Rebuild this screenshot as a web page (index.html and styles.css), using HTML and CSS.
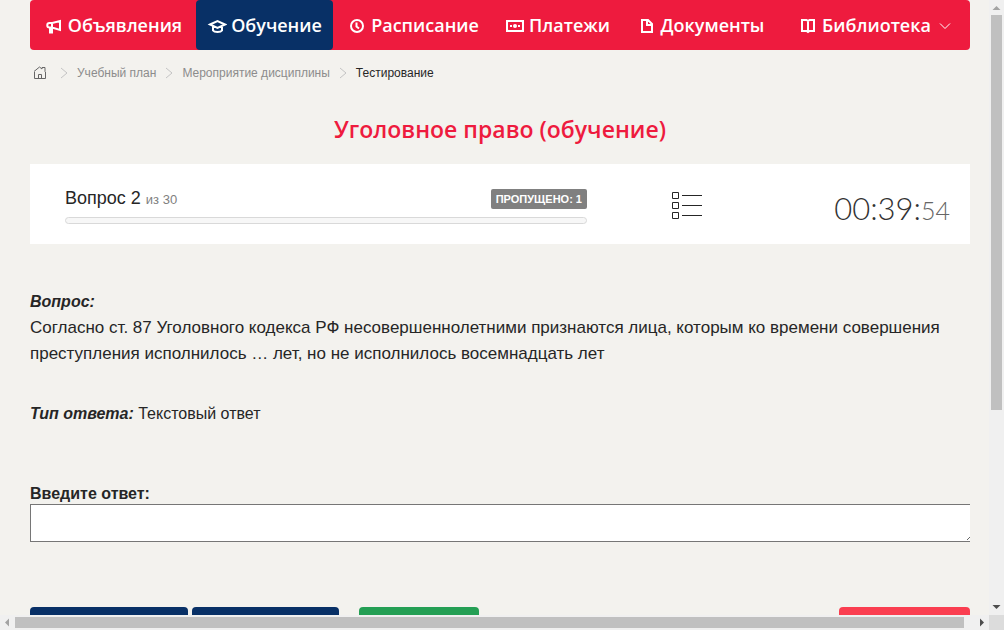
FILE: index.html
```
<!DOCTYPE html>
<html lang="ru">
<head>
<meta charset="utf-8">
<meta name="viewport" content="width=device-width, initial-scale=1">
<title>Тестирование</title>
<link rel="stylesheet" href="styles.css">
</head>
<body>
<div class="window">
  <div class="page">
    <nav class="menu">
      <a class="menu-item" href="#">
        <svg class="icon" viewBox="0 0 20 20"><path d="M8 7H5.500a2 2 0 0 0 0 4.500H8L16 14V5L8 7v9.500H6V12"/></svg>
        <span>Объявления</span>
      </a>
      <a class="menu-item active" href="#">
        <svg class="icon" viewBox="0 0 20 20"><path d="M3 8.500L10.500 5L18 8.500L10.500 12zM6 10v4.500Q7 16 10.500 16T15 14.500V10"/></svg>
        <span>Обучение</span>
      </a>
      <a class="menu-item" href="#">
        <svg class="icon" viewBox="0 0 20 20"><circle cx="10" cy="10" r="6"/><path d="M9.500 6.500V10.500L12 12.500"/></svg>
        <span>Расписание</span>
      </a>
      <a class="menu-item" href="#">
        <svg class="icon" viewBox="0 0 20 20"><path d="M2 5h16v10H2z"/><circle class="solid" cx="10" cy="10" r="2"/><path class="solid" d="M1 4h5L1 8zM19 4h-5l5 4zM1 16h5l-5-4zM19 16h-5l5-4zM5 9h2v2H5zM13 9h2v2h-2z"/></svg>
        <span>Платежи</span>
      </a>
      <a class="menu-item" href="#">
        <svg class="icon" viewBox="0 0 20 20"><path d="M5 4h6l4 4v8H5zM10 4v5h5"/></svg>
        <span>Документы</span>
      </a>
      <a class="menu-item" href="#">
        <svg class="icon" viewBox="0 0 20 20"><path d="M4 4h4.500L10 5l1.500-1H16v11h-4.500L10 16 8.500 15H4zM10 5v11"/></svg>
        <span>Библиотека</span>
        <svg class="caret" viewBox="0 0 12 8"><path d="M1 1.500l5 5 5-5"/></svg>
      </a>
    </nav>

    <div class="crumbs">
      <a class="home" href="#"><svg viewBox="0 0 14 14"><path d="M1 5.500L6.500 1 9 3V1.500h3V5.500L12.500 6V12.500H1.500V6M5.500 12.500v-4h3v4"/></svg></a>
      <svg class="sep" viewBox="0 0 8 12"><path d="M1 1l6 5-6 5"/></svg>
      <a href="#">Учебный план</a>
      <svg class="sep" viewBox="0 0 8 12"><path d="M1 1l6 5-6 5"/></svg>
      <a href="#">Мероприятие дисциплины</a>
      <svg class="sep" viewBox="0 0 8 12"><path d="M1 1l6 5-6 5"/></svg>
      <span class="current">Тестирование</span>
    </div>

    <h1 class="title">Уголовное право (обучение)</h1>

    <section class="status">
      <div class="progress">
        <div class="progress-head">
          <div class="count">Вопрос 2 <small>из 30</small></div>
          <span class="badge">ПРОПУЩЕНО: 1</span>
        </div>
        <div class="bar"></div>
      </div>
      <button class="list-button" type="button">
        <svg viewBox="0 0 32 30"><path d="M1.500 1.500h6v6h-6zM1.500 11.500h6v6h-6zM1.500 21.500h6v6h-6zM11 4.500h20M11 14.500h20M11 24.500h20"/></svg>
      </button>
      <div class="timer">00:39:<small>54</small></div>
    </section>

    <main class="question">
      <div class="question-text">
        <b class="lead">Вопрос:</b>
        <p>Согласно ст. 87 Уголовного кодекса РФ несовершеннолетними признаются лица, которым ко времени совершения преступления исполнилось … лет, но не исполнилось восемнадцать лет</p>
      </div>
      <p class="type"><b class="lead">Тип ответа:</b> Текстовый ответ</p>
      <label class="answer-label" for="answer">Введите ответ:</label>
      <div class="answer-box"><textarea class="answer" id="answer"></textarea></div>
      <div class="actions">
        <button class="btn previous" type="button"></button>
        <button class="btn next" type="button"></button>
        <button class="btn save" type="button"></button>
        <button class="btn finish" type="button"></button>
      </div>
    </main>
  </div>

  <div class="scroll vertical">
    <svg class="arrow dim" viewBox="0 0 15 15"><path d="M3.500 10h8L7.500 6z"/></svg>
    <div class="track"><div class="thumb"></div></div>
    <svg class="arrow" viewBox="0 0 15 15"><path d="M3.500 5h8L7.500 9z"/></svg>
  </div>
  <div class="scroll horizontal">
    <svg class="arrow dim" viewBox="0 0 15 15"><path d="M9 3.500v8L5 7.500z"/></svg>
    <div class="track"><div class="thumb"></div></div>
    <svg class="arrow" viewBox="0 0 15 15"><path d="M6 3.500v8l4-4z"/></svg>
  </div>
  <div class="corner"></div>
</div>
</body>
</html>
```
FILE: styles.css
```
* { box-sizing: border-box; }
body {
  margin: 0;
  background: #f3f2ee;
  color: #262626;
  font: 16px/20px "Liberation Sans", Arial, sans-serif;
}
p, h1 { margin: 0; }
a { color: inherit; text-decoration: none; }
button { border: 0; padding: 0; background: none; cursor: pointer; }
svg { display: block; flex: none; fill: none; stroke: currentColor; }

.window {
  display: grid;
  grid-template: minmax(0, 1fr) 15px / minmax(0, 1fr) 15px;
  height: 100vh;
}
.page { overflow: hidden; padding: 0 19px 0 30px; }

.menu {
  display: grid;
  grid-template-columns: 166fr 137fr 160fr 129fr 157fr 191fr;
  height: 50px;
  border-radius: 4px;
  background: #ee1b3e;
  color: #fff;
  font: 600 18px/24px "Open Sans", "Noto Sans", sans-serif;
}
.menu-item {
  display: flex;
  align-items: center;
  justify-content: center;
  gap: 4px;
  border-radius: 4px;
  white-space: nowrap;
}
.active { background: #083066; }
.icon { width: 20px; height: 20px; margin-top: 2px; stroke-width: 2; }
.solid { fill: currentColor; stroke: none; }
.caret { width: 12px; height: 8px; margin: 2px 0 0 4px; }

.crumbs {
  display: flex;
  align-items: center;
  gap: 9px;
  height: 46px;
  padding-left: 3px;
  color: #8c8c8c;
  font-size: 12px;
}
.home { margin-right: 4px; color: #666; }
.home svg { width: 14px; height: 14px; }
.sep { width: 8px; height: 12px; stroke: #c4c4c4; }
.current { color: #262626; }

.title {
  padding: 18px 0 20px;
  color: #ee1b3e;
  font: 600 23px/30px "Open Sans", "Noto Sans", sans-serif;
  text-align: center;
}

.status {
  display: grid;
  grid-template-columns: 522fr 84px 32px 247fr;
  align-items: center;
  height: 80px;
  padding: 4px 20px 0 35px;
  background: #fff;
}
.progress-head { display: flex; align-items: center; justify-content: space-between; }
.count { font-size: 18px; }
.count small { color: #808080; font-size: 13px; }
.badge {
  padding: 0 5px;
  border-radius: 2px;
  background: #808080;
  color: #fff;
  font-size: 11px;
  font-weight: bold;
}
.bar {
  height: 7px;
  margin-top: 7px;
  border: 1px solid #d9d9d9;
  border-radius: 4px;
  background: #f7f7f7;
}
.list-button { grid-column: 3; color: #262626; }
.list-button svg { width: 32px; height: 30px; }
.timer {
  padding-top: 6px;
  color: #333;
  font: 300 31px/40px Lato, sans-serif;
  text-align: right;
}
.timer small { color: #666; font-size: 25px; }

.question-text { padding-top: 45px; font-size: 17px; line-height: 26px; }
.lead { font-size: 16px; font-style: italic; }
.type { padding-top: 37px; }
.answer-label { display: block; padding-top: 60px; font-weight: bold; }
.answer-box { overflow: hidden; }
.answer {
  display: block;
  width: calc(100% + 6px);
  height: 38px;
  border: 1px solid #767676;
  background: #fff;
  resize: vertical;
}
.actions { display: flex; gap: 4px; padding-top: 65px; }
.btn { height: 40px; border-radius: 4px; }
.previous { width: 158px; background: #083066; }
.next { width: 147px; background: #083066; }
.save { width: 120px; margin-left: 16px; background: #249f54; }
.finish { width: 131px; margin-left: auto; background: #fa3e50; }

.scroll { display: flex; background: #f0f0f0; }
.vertical { flex-direction: column; }
.track { display: flex; flex: 1; }
.thumb { background: #c0c0c0; }
.vertical .track { flex-direction: column; padding: 0 2px; }
.vertical .thumb { height: 67.5%; }
.horizontal .track { padding: 2px 0; }
.horizontal .thumb { width: 99%; }
.arrow { width: 15px; height: 15px; fill: #4d4d4d; stroke: none; }
.dim { fill: #a3a3a3; }
.corner { background: #dcdcdc; }
```
